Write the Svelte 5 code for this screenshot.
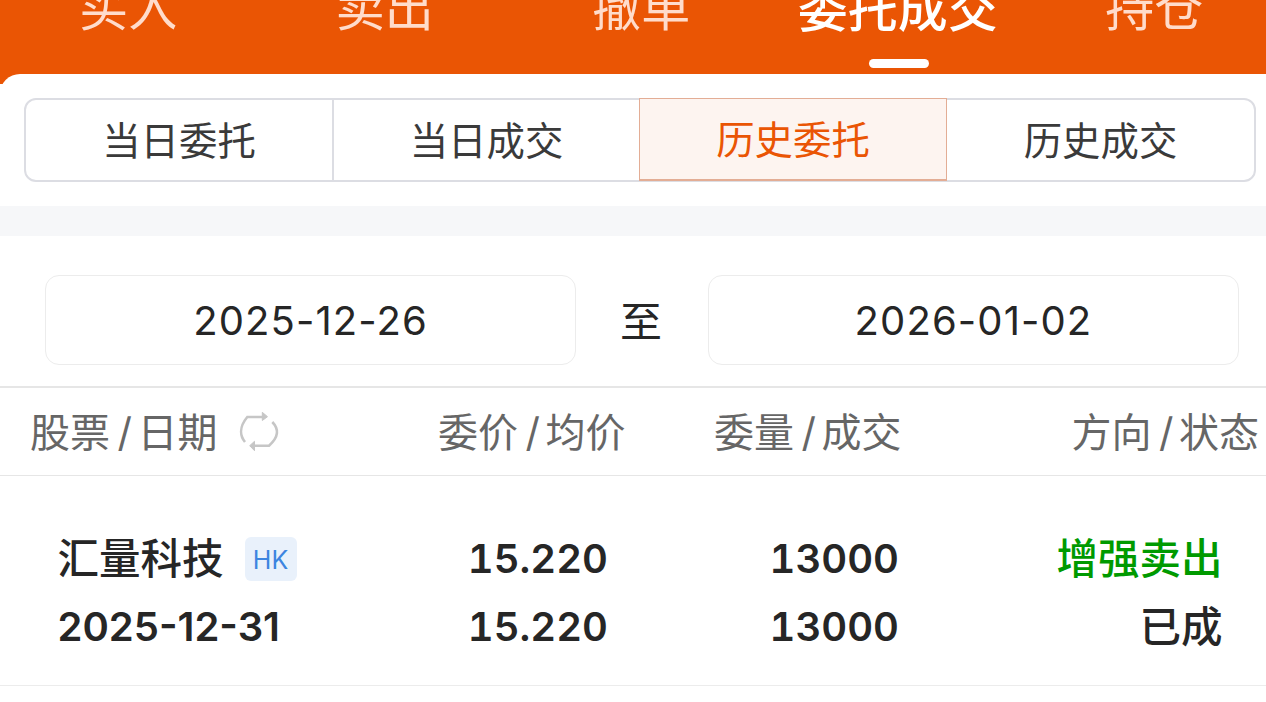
<script>
	const navItems = [
		{ label: '买入' },
		{ label: '卖出' },
		{ label: '撤单' },
		{ label: '委托成交', active: true },
		{ label: '持仓' }
	];
	const segments = [
		{ label: '当日委托' },
		{ label: '当日成交' },
		{ label: '历史委托', active: true },
		{ label: '历史成交' }
	];
</script>

<div class="page">
	<nav class="nav">
		{#each navItems as item}
			<div class="nav-item" class:active={item.active}>
				<span>{item.label}</span>
				{#if item.active}<i class="nav-line"></i>{/if}
			</div>
		{/each}
	</nav>

	<div class="panel">
		<div class="segments">
			{#each segments as seg}
				<div class="segment" class:active={seg.active}>{seg.label}</div>
			{/each}
		</div>
	</div>

	<div class="gap"></div>

	<div class="dates">
		<div class="date">2025-12-26</div>
		<div class="to">至</div>
		<div class="date">2026-01-02</div>
	</div>

	<div class="thead">
		<div class="th th-name">
			<span>股票<em>/</em>日期</span>
			<svg class="swap" width="40" height="40" viewBox="0 0 40 40" fill="none" stroke="#c6c6c6" stroke-width="2.6">
				<path d="M6 30 C1 24 0 15 8.3 5 H25" />
				<path d="M28.5 4.7 L23.3 0.3 V8.5 Z" fill="#c6c6c6" stroke-width="1" />
				<path d="M33.3 10 C40 17 40 25 30 33.7 H14" />
				<path d="M10.7 33.7 L15.5 29.3 V38.7 Z" fill="#c6c6c6" stroke-width="1" />
			</svg>
		</div>
		<div class="th th-price">委价<em>/</em>均价</div>
		<div class="th th-qty">委量<em>/</em>成交</div>
		<div class="th th-state">方向<em>/</em>状态</div>
	</div>

	<div class="row">
		<div class="cell cell-name">
			<div class="stock">汇量科技<span class="tag">HK</span></div>
			<div class="num">2025-12-31</div>
		</div>
		<div class="cell cell-price">
			<div class="num">15.220</div>
			<div class="num">15.220</div>
		</div>
		<div class="cell cell-qty">
			<div class="num">13000</div>
			<div class="num">13000</div>
		</div>
		<div class="cell cell-state">
			<div class="green">增强卖出</div>
			<div>已成</div>
		</div>
	</div>
</div>

<style>
	:global(body) {
		margin: 0;
		overflow: hidden;
		background: #fff;
	}

	.page {
		width: 1266px;
		height: 702px;
		overflow: hidden;
		font-family: Inter, "Noto Sans CJK SC", sans-serif;
		color: #262626;
	}

	.nav {
		display: flex;
		height: 84px;
		background: #ea5504;
		overflow: hidden;
	}

	.nav-item {
		flex: 0 0 256.5px;
		position: relative;
		text-align: center;
		font-size: 49px;
		line-height: 48px;
		margin-top: -15px;
		color: #ffdccb;
		white-space: nowrap;
	}

	.nav-item.active {
		color: #fff;
		font-size: 50px;
		font-weight: 500;
	}

	.nav-line {
		position: absolute;
		left: 99px;
		top: 74px;
		width: 60px;
		height: 9px;
		border-radius: 5px;
		background: #fff;
	}

	.panel {
		margin-top: -10px;
		height: 132px;
		box-sizing: border-box;
		padding: 24px 10px 0 24px;
		background: #fff;
		border-radius: 20px 0 0 0;
		position: relative;
	}

	.segments {
		display: grid;
		grid-template-columns: 306px 307px 308px 1fr;
		height: 84px;
		box-sizing: border-box;
		border: 2px solid #dcdde3;
		border-radius: 12px;
	}

	.segment {
		margin: -1px 0;
		padding-bottom: 4px;
		display: flex;
		align-items: center;
		justify-content: center;
		font-size: 38.4px;
		color: #3a3a3a;
		border-left: 2px solid #dcdde3;
	}

	.segment:first-child {
		border-left: 0;
	}

	.segment.active {
		margin: -2px 0 -1px;
		background: #fdf4f0;
		color: #ea5504;
		border: 1px solid #e3ad95;
		border-bottom-width: 2px;
	}

	.segment.active + .segment {
		border-left: 0;
	}

	.gap {
		height: 30px;
		background: #f6f7f9;
	}

	.dates {
		display: flex;
		align-items: center;
		height: 152px;
		box-sizing: border-box;
		padding: 40px 27px 22px 45px;
		border-bottom: 2px solid #e6e6e6;
	}

	.date {
		flex: 1;
		height: 90px;
		box-sizing: border-box;
		border: 1px solid #ececec;
		border-radius: 14px;
		display: flex;
		align-items: center;
		justify-content: center;
		font-size: 40px;
		letter-spacing: 1.1px;
		color: #262626;
	}

	.to {
		width: 132px;
		box-sizing: border-box;
		text-align: center;
		font-size: 42px;
		padding: 0 2px 4px 0;
	}

	.thead {
		display: flex;
		align-items: center;
		height: 88px;
		box-sizing: border-box;
		padding-bottom: 4px;
		border-bottom: 1px solid #e6e6e6;
		font-size: 40px;
		color: #666;
	}

	.th em {
		font-style: normal;
		margin: 0 5.5px 0 7.5px;
	}

	.th-name {
		display: flex;
		align-items: center;
		gap: 22px;
		width: 438px;
		padding-left: 30px;
		box-sizing: border-box;
	}

	.swap {
		margin-top: 5px;
		filter: blur(0.5px);
	}

	.th-price {
		width: 276px;
	}

	.th-qty {
		width: 290px;
	}

	.th-state {
		flex: 1;
		text-align: right;
		padding-right: 7px;
		white-space: nowrap;
	}

	.row {
		display: flex;
		height: 210px;
		box-sizing: border-box;
		border-bottom: 1px solid #ececec;
		padding-top: 49px;
		font-weight: 500;
		font-size: 41.5px;
	}

	.cell > div {
		height: 68px;
		line-height: 68px;
	}

	.num {
		font-size: 40px;
		font-weight: 600;
		font-variant-numeric: tabular-nums;
	}

	.cell-name {
		width: 430px;
		padding-left: 57.5px;
		box-sizing: border-box;
	}

	.cell-name .num {
		font-variant-numeric: normal;
	}

	.stock {
		display: flex;
		align-items: center;
	}

	.tag {
		margin-left: 21px;
		width: 52px;
		height: 44px;
		border-radius: 6px;
		background: #e9f1fb;
		color: #3d85e0;
		font-size: 25px;
		font-weight: 400;
		line-height: 46px;
		text-align: center;
	}

	.cell-price {
		width: 178px;
		text-align: right;
	}

	.cell-qty {
		width: 291px;
		text-align: right;
	}

	.cell-state {
		flex: 1;
		text-align: right;
		padding-right: 43.5px;
	}

	.green {
		color: #009a00;
	}
</style>
